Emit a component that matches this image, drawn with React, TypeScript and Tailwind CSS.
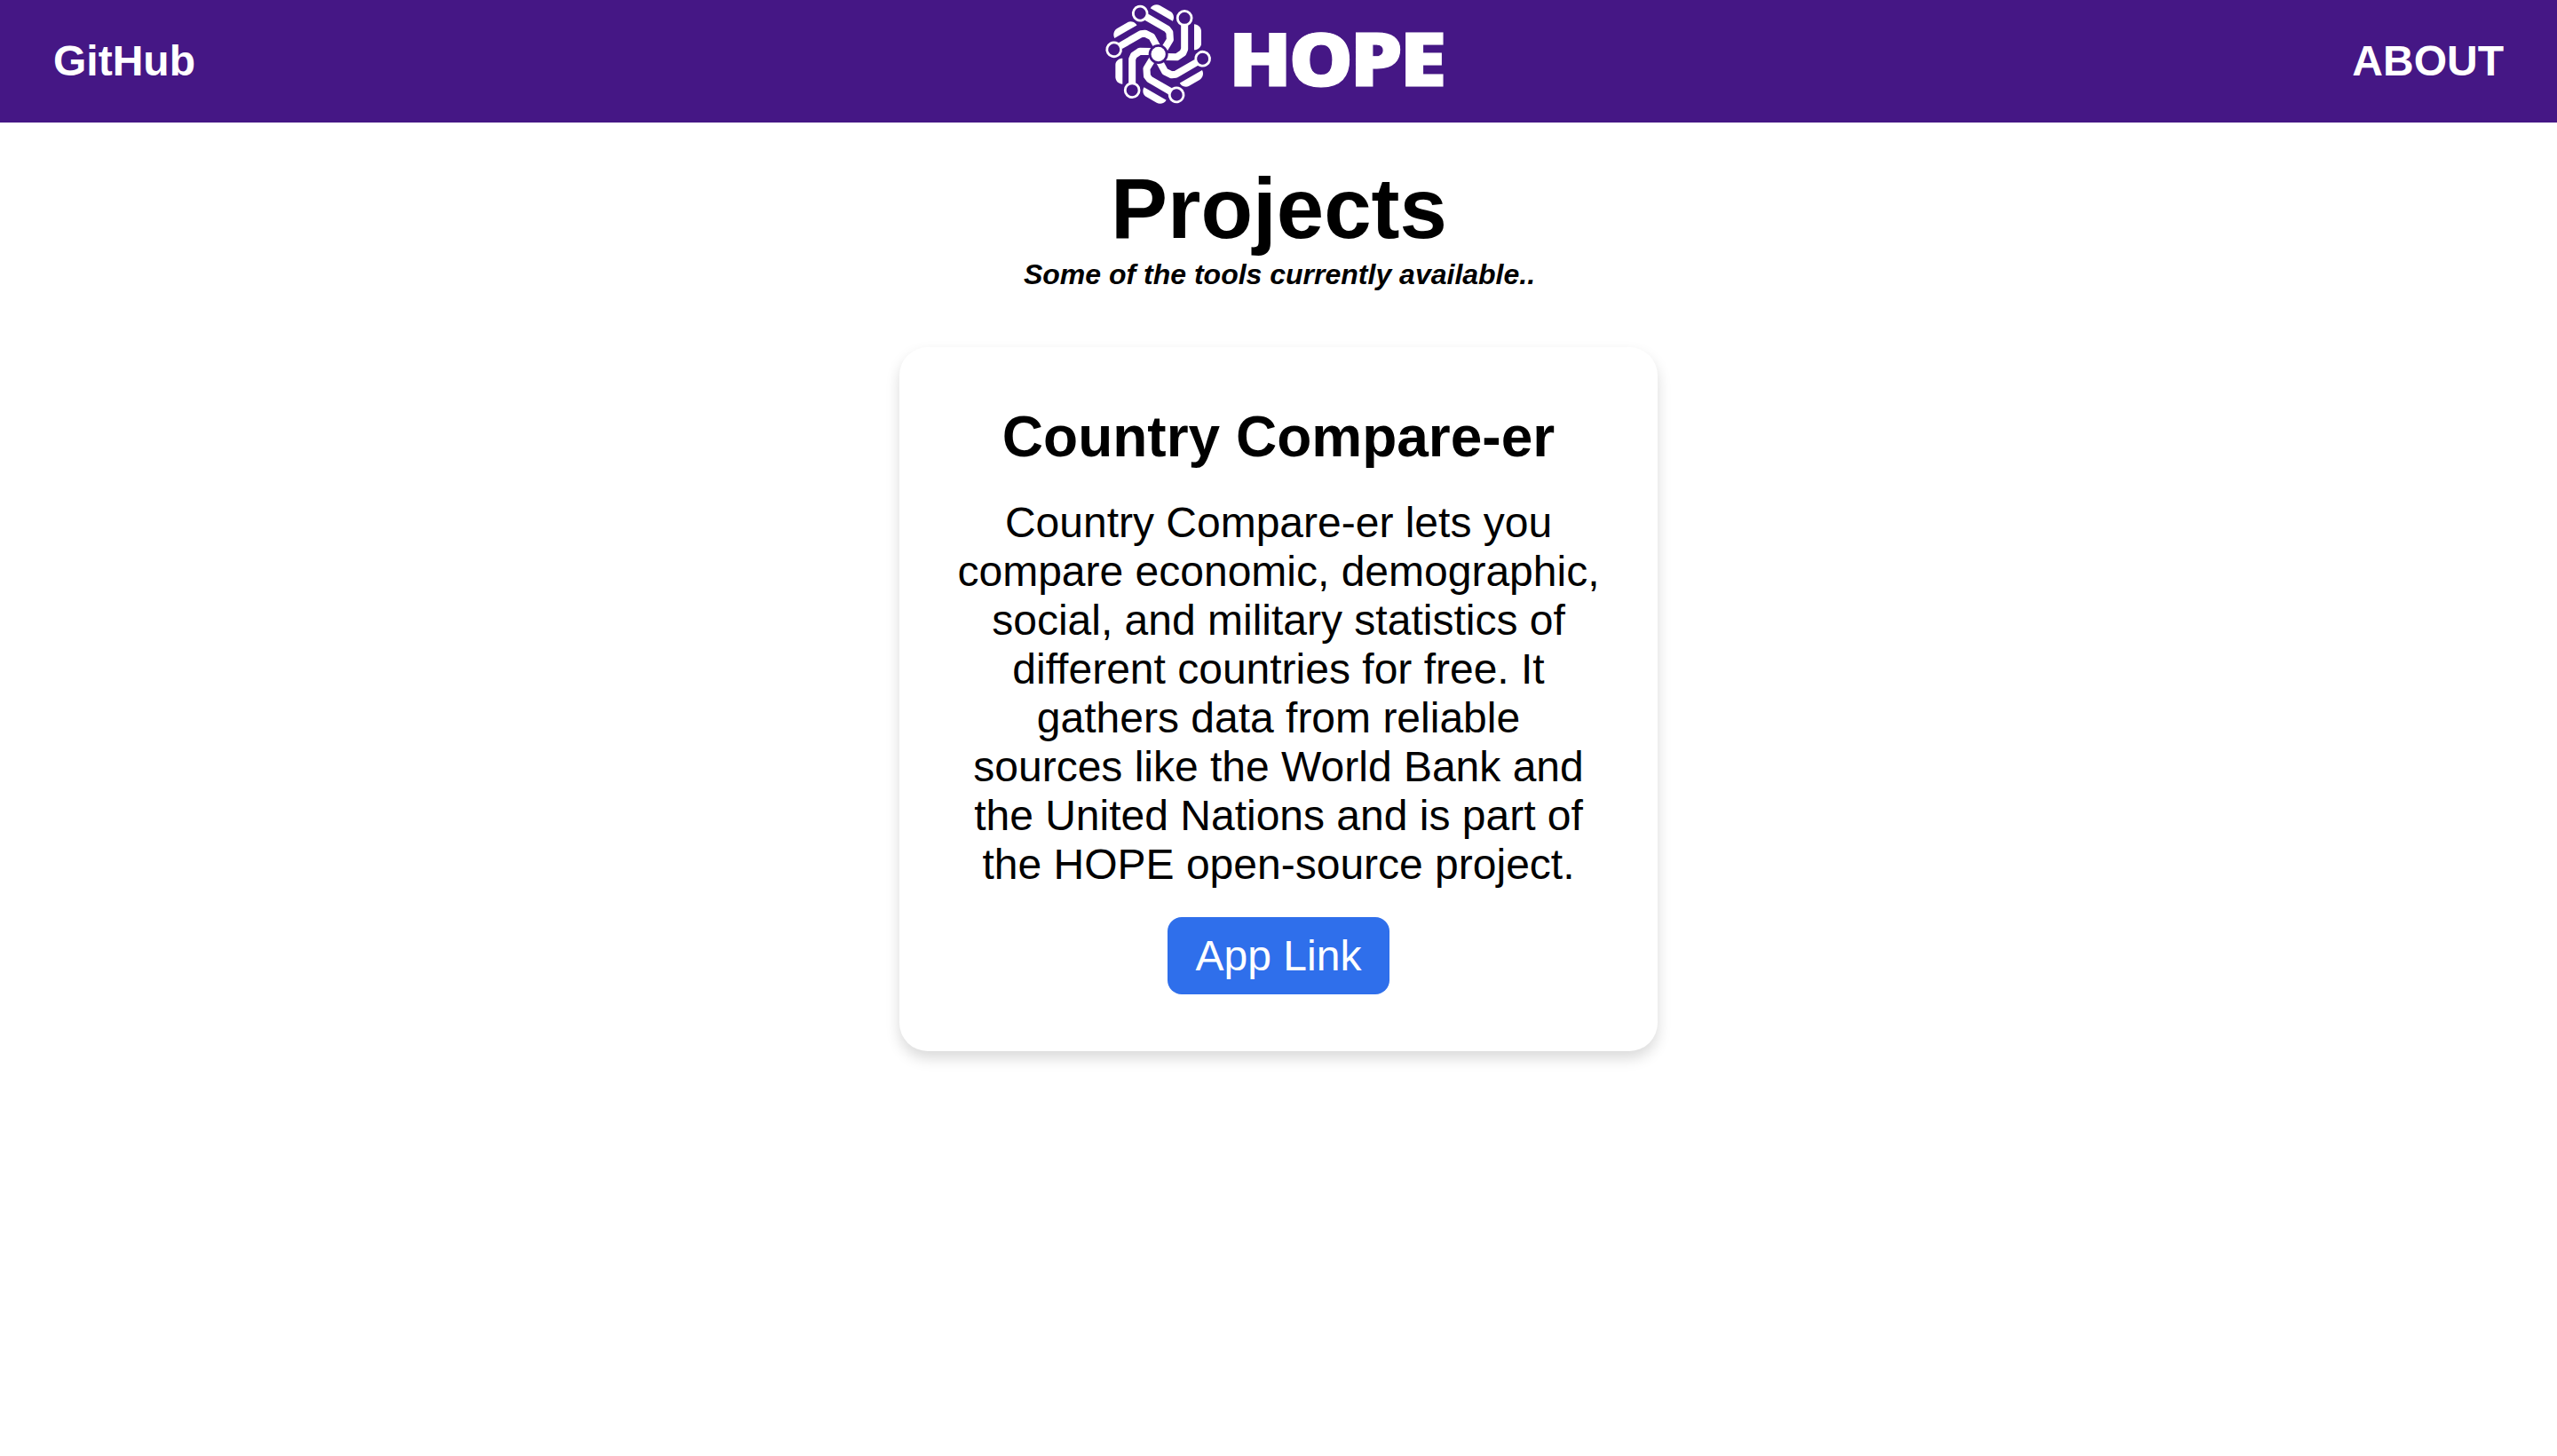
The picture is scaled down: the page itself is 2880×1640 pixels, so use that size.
const ARMS = [0, 60, 120, 180, 240, 300];

const LETTERS = [
  { glyph: "H", transform: "translate(7.7 96.5) scale(1.128 1)" },
  { glyph: "O", transform: "translate(75.5 96.5) scale(1.106 1)" },
  { glyph: "P", transform: "translate(144.3 96.5) scale(1.146 1)" },
  { glyph: "E", transform: "translate(200.2 96.5) scale(1.176 1)" },
];

function Emblem() {
  return (
    <svg viewBox="0 0 420 420" className="h-[140px] w-[140px] shrink-0" aria-hidden="true">
      {ARMS.map((angle) => (
        <g key={angle} transform={`rotate(${angle} 206 183)`}>
          <path d="M294.5 86V166L289 179L268 193L228 192" fill="none" stroke="#fff" strokeWidth="24" strokeLinejoin="round" />
          <circle cx="294.5" cy="61" r="23.75" fill="#451785" stroke="#fff" strokeWidth="8.5" />
          <path d="M327 82C340 82 351 93 351 106V148C351 158 341 168 330 169H327Z" fill="#fff" />
        </g>
      ))}
      <circle cx="206" cy="183" r="33" fill="#451785" />
      <circle cx="206" cy="183" r="24.5" fill="#fff" />
    </svg>
  );
}

function Wordmark() {
  return (
    <svg viewBox="0 0 268 138" className="h-[138px] w-[268px] shrink-0" role="img" aria-label="HOPE">
      {LETTERS.map((l) => (
        <text
          key={l.glyph}
          transform={l.transform}
          fill="#fff"
          stroke="#fff"
          strokeWidth="1"
          fontSize="82.6"
          className="font-['Open_Sans',sans-serif] font-extrabold"
        >
          {l.glyph}
        </text>
      ))}
    </svg>
  );
}

export default function App() {
  return (
    <div className="min-h-[1640px] bg-white font-['Liberation_Sans',Helvetica,Arial,sans-serif] text-black">
      <header className="grid h-[138px] grid-cols-[1fr_auto_1fr] items-center bg-[#451785] px-[60px] text-5xl leading-[55px] font-bold text-white">
        <a href="#github" className="pb-px">GitHub</a>
        <div className="flex h-[138px] items-start">
          <Emblem />
          <Wordmark />
        </div>
        <a href="#about" className="pb-px text-right">ABOUT</a>
      </header>
      <main className="flex flex-col items-center pt-[42px]">
        <h1 className="mb-px pl-px text-8xl leading-[109px] font-bold">Projects</h1>
        <p className="pl-0.5 text-[32px] leading-[38px] font-bold italic">Some of the tools currently available..</p>
        <section className="mt-[63px] flex w-[854px] flex-col items-center gap-8 rounded-[32px] bg-white p-16 text-center shadow-[0_8px_16px_rgba(0,0,0,0.15)]">
          <h2 className="text-[64px] leading-[74px] font-bold">Country Compare-er</h2>
          <p className="w-[724px] text-5xl leading-[55px]">
            Country Compare-er lets you compare economic, demographic, social, and military statistics of different
            countries for free. It gathers data from reliable sources like the World Bank and the United Nations and is
            part of the HOPE open-source project.
          </p>
          <a href="#app" className="rounded-2xl bg-[#2f6feb] px-8 py-4 text-5xl leading-[55px] text-white">App Link</a>
        </section>
      </main>
    </div>
  );
}
